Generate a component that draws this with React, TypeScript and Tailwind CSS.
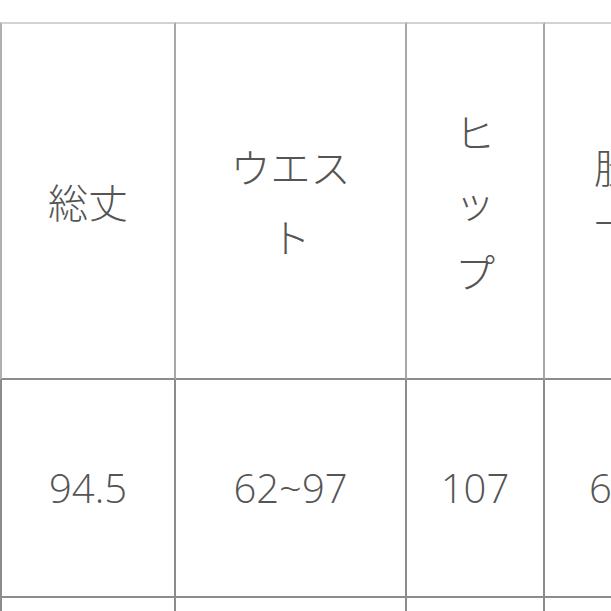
import React from "react";

const font = { fontFamily: '"Noto Sans CJK JP", "Noto Sans", sans-serif' };
const numFont = { fontFamily: '"Open Sans", "Noto Sans", sans-serif' };

const App: React.FC = () => {
  return (
    <div className="w-[611px] h-[611px] overflow-hidden bg-white pt-[22px]" style={font}>
      <div className="flex w-[800px] text-[#555555] font-extralight text-[40px] leading-[70px]">
        {/* col 1 */}
        <div className="flex flex-col w-[176px] shrink-0">
          <div className="h-[358px] border-l-2 border-t-2 border-r-2 border-b-2 border-l-[#b0b0b0] border-t-[#d2d2d2] border-r-[#a8a8a8] border-b-[#8c8c8c] flex items-center justify-center">
            総丈
          </div>
          <div className="h-[218px] border-l-2 border-r-2 border-b-2 border-[#8c8c8c] flex items-center justify-center font-light text-[40px]" style={numFont}>
            94.5
          </div>
          <div className="h-[60px] border-l-2 border-r-2 border-[#8c8c8c]" />
        </div>
        {/* col 2 */}
        <div className="flex flex-col w-[231px] shrink-0">
          <div className="h-[358px] border-t-2 border-r-2 border-b-2 border-t-[#d2d2d2] border-r-[#a8a8a8] border-b-[#8c8c8c] flex items-center justify-center px-[50px] text-center">
            ウエスト
          </div>
          <div className="h-[218px] border-r-2 border-b-2 border-[#8c8c8c] flex items-center justify-center font-light text-[40px]" style={numFont}>
            62~97
          </div>
          <div className="h-[60px] border-r-2 border-[#8c8c8c]" />
        </div>
        {/* col 3 */}
        <div className="flex flex-col w-[138px] shrink-0">
          <div className="h-[358px] border-t-2 border-r-2 border-b-2 border-t-[#d2d2d2] border-r-[#a8a8a8] border-b-[#8c8c8c] flex items-center justify-center px-[40px] text-center">
            ヒップ
          </div>
          <div className="h-[218px] border-r-2 border-b-2 border-[#8c8c8c] flex items-center justify-center font-light text-[40px]" style={numFont}>
            107
          </div>
          <div className="h-[60px] border-r-2 border-[#8c8c8c]" />
        </div>
        {/* col 4 */}
        <div className="flex flex-col w-[140px] shrink-0">
          <div className="h-[358px] border-t-2 border-r-2 border-b-2 border-t-[#d2d2d2] border-r-[#a8a8a8] border-b-[#8c8c8c] flex items-center justify-center px-[46px] text-center">
            股下
          </div>
          <div className="h-[218px] border-r-2 border-b-2 border-[#8c8c8c] flex items-center justify-start pl-[44px] font-light text-[40px]" style={numFont}>
            62
          </div>
          <div className="h-[60px] border-r-2 border-[#8c8c8c]" />
        </div>
      </div>
    </div>
  );
};

export default App;
